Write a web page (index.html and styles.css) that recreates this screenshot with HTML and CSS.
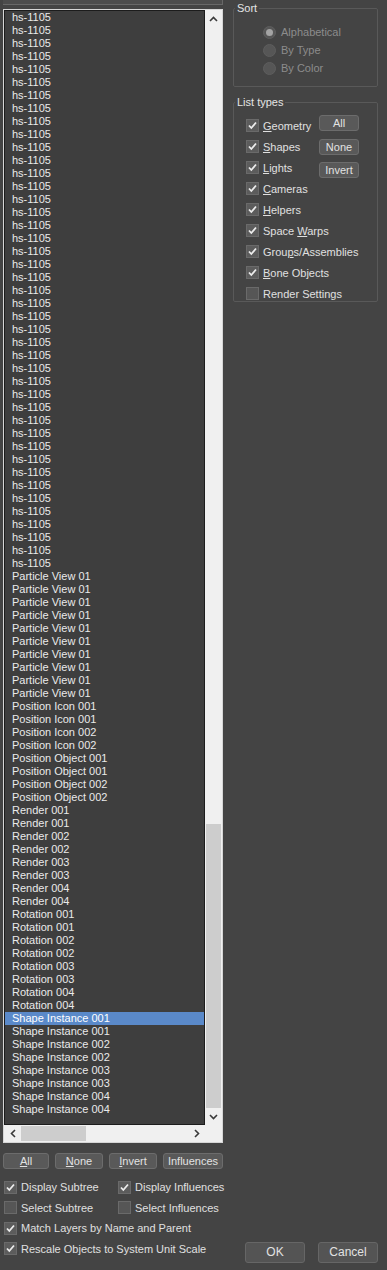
FILE: index.html
```html
<!DOCTYPE html>
<html>
<head>
<meta charset="utf-8">
<link rel="stylesheet" href="styles.css">
</head>
<body>
<div class="page">
  <div class="left">
    <div class="topstrip"></div>
    <div class="frame">
      <div class="list">
        <div class="row">hs-1105</div><div class="row">hs-1105</div><div class="row">hs-1105</div><div class="row">hs-1105</div><div class="row">hs-1105</div>
        <div class="row">hs-1105</div><div class="row">hs-1105</div><div class="row">hs-1105</div><div class="row">hs-1105</div><div class="row">hs-1105</div>
        <div class="row">hs-1105</div><div class="row">hs-1105</div><div class="row">hs-1105</div><div class="row">hs-1105</div><div class="row">hs-1105</div>
        <div class="row">hs-1105</div><div class="row">hs-1105</div><div class="row">hs-1105</div><div class="row">hs-1105</div><div class="row">hs-1105</div>
        <div class="row">hs-1105</div><div class="row">hs-1105</div><div class="row">hs-1105</div><div class="row">hs-1105</div><div class="row">hs-1105</div>
        <div class="row">hs-1105</div><div class="row">hs-1105</div><div class="row">hs-1105</div><div class="row">hs-1105</div><div class="row">hs-1105</div>
        <div class="row">hs-1105</div><div class="row">hs-1105</div><div class="row">hs-1105</div><div class="row">hs-1105</div><div class="row">hs-1105</div>
        <div class="row">hs-1105</div><div class="row">hs-1105</div><div class="row">hs-1105</div><div class="row">hs-1105</div><div class="row">hs-1105</div>
        <div class="row">hs-1105</div><div class="row">hs-1105</div><div class="row">hs-1105</div>
        <div class="row">Particle View 01</div><div class="row">Particle View 01</div><div class="row">Particle View 01</div><div class="row">Particle View 01</div><div class="row">Particle View 01</div>
        <div class="row">Particle View 01</div><div class="row">Particle View 01</div><div class="row">Particle View 01</div><div class="row">Particle View 01</div><div class="row">Particle View 01</div>
        <div class="row">Position Icon 001</div><div class="row">Position Icon 001</div>
        <div class="row">Position Icon 002</div><div class="row">Position Icon 002</div>
        <div class="row">Position Object 001</div><div class="row">Position Object 001</div>
        <div class="row">Position Object 002</div><div class="row">Position Object 002</div>
        <div class="row">Render 001</div><div class="row">Render 001</div>
        <div class="row">Render 002</div><div class="row">Render 002</div>
        <div class="row">Render 003</div><div class="row">Render 003</div>
        <div class="row">Render 004</div><div class="row">Render 004</div>
        <div class="row">Rotation 001</div><div class="row">Rotation 001</div>
        <div class="row">Rotation 002</div><div class="row">Rotation 002</div>
        <div class="row">Rotation 003</div><div class="row">Rotation 003</div>
        <div class="row">Rotation 004</div><div class="row">Rotation 004</div>
        <div class="row selected">Shape Instance 001</div><div class="row">Shape Instance 001</div>
        <div class="row">Shape Instance 002</div><div class="row">Shape Instance 002</div>
        <div class="row">Shape Instance 003</div><div class="row">Shape Instance 003</div>
        <div class="row">Shape Instance 004</div><div class="row">Shape Instance 004</div>
      </div>
      <div class="vscroll">
        <div class="arrow"><svg width="9" height="6" viewBox="0 0 9 6"><polyline points="1,5 4.5,1.5 8,5" fill="none" stroke="#3a3a3a" stroke-width="1.6"/></svg></div>
        <div class="track"><div class="thumb"></div></div>
        <div class="arrow"><svg width="9" height="6" viewBox="0 0 9 6"><polyline points="1,1 4.5,4.5 8,1" fill="none" stroke="#3a3a3a" stroke-width="1.6"/></svg></div>
      </div>
      <div class="hscroll">
        <div class="arrow"><svg width="6" height="9" viewBox="0 0 6 9"><polyline points="5,1 1.5,4.5 5,8" fill="none" stroke="#3a3a3a" stroke-width="1.6"/></svg></div>
        <div class="htrack"><div class="hthumb"></div></div>
        <div class="arrow"><svg width="6" height="9" viewBox="0 0 6 9"><polyline points="1,1 4.5,4.5 1,8" fill="none" stroke="#3a3a3a" stroke-width="1.6"/></svg></div>
      </div>
      <div class="corner"></div>
    </div>
    <div class="btnrow">
      <button class="btn w46"><u>A</u>ll</button>
      <button class="btn w48"><u>N</u>one</button>
      <button class="btn w48"><u>I</u>nvert</button>
      <button class="btn w60">Influences</button>
    </div>
    <div class="opts">
      <label class="opt"><span class="cb on"><svg width="11" height="11" viewBox="0 0 11 11"><polyline points="2,5.5 4.3,8 9,2.5" fill="none" stroke="#ececec" stroke-width="1.8"/></svg></span>Display Subtree</label>
      <label class="opt"><span class="cb on"><svg width="11" height="11" viewBox="0 0 11 11"><polyline points="2,5.5 4.3,8 9,2.5" fill="none" stroke="#ececec" stroke-width="1.8"/></svg></span>Display Influences</label>
      <label class="opt"><span class="cb"></span>Select Subtree</label>
      <label class="opt"><span class="cb"></span>Select Influences</label>
      <label class="opt span2"><span class="cb on"><svg width="11" height="11" viewBox="0 0 11 11"><polyline points="2,5.5 4.3,8 9,2.5" fill="none" stroke="#ececec" stroke-width="1.8"/></svg></span>Match Layers by Name and Parent</label>
      <label class="opt span2"><span class="cb on"><svg width="11" height="11" viewBox="0 0 11 11"><polyline points="2,5.5 4.3,8 9,2.5" fill="none" stroke="#ececec" stroke-width="1.8"/></svg></span>Rescale Objects to System Unit Scale</label>
    </div>
  </div>
  <div class="right">
    <fieldset class="group">
      <legend>Sort</legend>
      <div class="sortbody">
        <div class="radio"><span class="rb sel"></span>Alphabetical</div>
        <div class="radio"><span class="rb"></span>By Type</div>
        <div class="radio"><span class="rb"></span>By Color</div>
      </div>
    </fieldset>
    <fieldset class="group types">
      <legend>List types</legend>
      <div class="typegrid">
        <div class="checks">
          <label class="chk"><span class="cb on"><svg width="11" height="11" viewBox="0 0 11 11"><polyline points="2,5.5 4.3,8 9,2.5" fill="none" stroke="#ececec" stroke-width="1.8"/></svg></span><span><u>G</u>eometry</span></label>
          <label class="chk"><span class="cb on"><svg width="11" height="11" viewBox="0 0 11 11"><polyline points="2,5.5 4.3,8 9,2.5" fill="none" stroke="#ececec" stroke-width="1.8"/></svg></span><span><u>S</u>hapes</span></label>
          <label class="chk"><span class="cb on"><svg width="11" height="11" viewBox="0 0 11 11"><polyline points="2,5.5 4.3,8 9,2.5" fill="none" stroke="#ececec" stroke-width="1.8"/></svg></span><span><u>L</u>ights</span></label>
          <label class="chk"><span class="cb on"><svg width="11" height="11" viewBox="0 0 11 11"><polyline points="2,5.5 4.3,8 9,2.5" fill="none" stroke="#ececec" stroke-width="1.8"/></svg></span><span><u>C</u>ameras</span></label>
          <label class="chk"><span class="cb on"><svg width="11" height="11" viewBox="0 0 11 11"><polyline points="2,5.5 4.3,8 9,2.5" fill="none" stroke="#ececec" stroke-width="1.8"/></svg></span><span><u>H</u>elpers</span></label>
          <label class="chk"><span class="cb on"><svg width="11" height="11" viewBox="0 0 11 11"><polyline points="2,5.5 4.3,8 9,2.5" fill="none" stroke="#ececec" stroke-width="1.8"/></svg></span><span>Space <u>W</u>arps</span></label>
          <label class="chk"><span class="cb on"><svg width="11" height="11" viewBox="0 0 11 11"><polyline points="2,5.5 4.3,8 9,2.5" fill="none" stroke="#ececec" stroke-width="1.8"/></svg></span><span>Grou<u>p</u>s/Assemblies</span></label>
          <label class="chk"><span class="cb on"><svg width="11" height="11" viewBox="0 0 11 11"><polyline points="2,5.5 4.3,8 9,2.5" fill="none" stroke="#ececec" stroke-width="1.8"/></svg></span><span><u>B</u>one Objects</span></label>
          <label class="chk"><span class="cb"></span><span>Render Settings</span></label>
        </div>
        <div class="typebtns">
          <button class="btn tb">All</button>
          <button class="btn tb">None</button>
          <button class="btn tb">Invert</button>
        </div>
      </div>
    </fieldset>
    <div class="dlgbtns">
      <button class="btn dlg">OK</button>
      <button class="btn dlg">Cancel</button>
    </div>
  </div>
</div>
</body>
</html>
```
FILE: styles.css
```css
* { box-sizing: border-box; }
html, body { margin: 0; padding: 0; }
body {
  background: #444444;
  font-family: "Liberation Sans", Arial, sans-serif;
  font-size: 11px;
  color: #e0e0e0;
  width: 387px;
  height: 1270px;
  overflow: hidden;
}
.page {
  display: flex;
  height: 1270px;
}
.left {
  width: 220px;
  margin-left: 3px;
  display: flex;
  flex-direction: column;
}
.topstrip {
  height: 5px;
  background: #4c4c4c;
  border-bottom: 1px solid #686868;
  border-right: 1px solid #686868;
}
.frame {
  margin-top: 4px;
  height: 1134px;
  border: 1px solid #d6d6d6;
  background: #f0f0f0;
  display: grid;
  grid-template-columns: 201px 17px;
  grid-template-rows: 1115px 17px;
}
.list {
  background: #3e3e3e;
  border: 1px solid #1c1c1c;
  overflow: hidden;
}
.row {
  height: 13px;
  line-height: 13px;
  padding-left: 7px;
  color: #eaeaea;
  white-space: nowrap;
}
.row.selected {
  background: #5a89c9;
  color: #ffffff;
}
.vscroll {
  display: flex;
  flex-direction: column;
}
.arrow {
  flex: 0 0 17px;
  display: flex;
  align-items: center;
  justify-content: center;
}
.track {
  flex: 1;
  display: flex;
  flex-direction: column;
  justify-content: flex-end;
}
.thumb {
  height: 284px;
  margin: 0 1px;
  background: #cdcdcd;
}
.hscroll {
  display: flex;
}
.htrack {
  flex: 1;
  display: flex;
}
.hthumb {
  width: 65px;
  margin: 1px 0;
  background: #cdcdcd;
}
.corner { background: #f0f0f0; }

.btn {
  font-family: "Liberation Sans", Arial, sans-serif;
  font-size: 11px;
  color: #e2e2e2;
  background: #595959;
  border: 1px solid #6c6c6c;
  border-radius: 3px;
  padding: 0;
  line-height: 14px;
  height: 16px;
  text-align: center;
}
.btnrow {
  margin-top: 10px;
  display: flex;
  justify-content: space-between;
}
.w46 { width: 46px; }
.w48 { width: 48px; }
.w60 { width: 60px; }

.opts {
  margin-top: 8px;
  display: grid;
  grid-template-columns: 114px 1fr;
  grid-auto-rows: 20.5px;
  padding-left: 1px;
}
.opt {
  display: flex;
  align-items: center;
  gap: 4px;
  color: #e0e0e0;
  white-space: nowrap;
}
.span2 { grid-column: span 2; }
.cb {
  width: 13px;
  height: 13px;
  flex: 0 0 13px;
  background: #565656;
  border: 1px solid #6a6a6a;
  display: flex;
  align-items: center;
  justify-content: center;
}
.cb.on { background: #5c5c5c; }

.right {
  width: 145px;
  margin-left: 10px;
  display: flex;
  flex-direction: column;
}
.group {
  margin: 2px 0 0 0;
  padding: 0;
  border: 1px solid #595959;
  border-radius: 2px;
  min-width: 0;
}
.group legend {
  padding: 0 2px;
  margin-left: 1px;
  line-height: 13px;
  color: #e4e4e4;
}
.sortbody {
  padding: 8px 0 9px 29px;
}
.radio {
  height: 18px;
  display: flex;
  align-items: center;
  gap: 5px;
  color: #8c8c8c;
}
.rb {
  width: 13px;
  height: 13px;
  border-radius: 50%;
  background: #565656;
  border: 1px solid #5e5e5e;
  display: flex;
  align-items: center;
  justify-content: center;
}
.rb.sel::after {
  content: "";
  width: 7px;
  height: 7px;
  border-radius: 50%;
  background: #a4a4a4;
}
.types {
  margin-top: 9px;
}
.typegrid {
  display: grid;
  grid-template-columns: minmax(0, 1fr) 40px;
  padding: 6px 18px 1px 12px;
}
.checks {
  margin-top: 4px;
  display: flex;
  flex-direction: column;
  gap: 8px;
}
.chk {
  height: 13px;
  display: flex;
  align-items: center;
  gap: 4px;
  white-space: nowrap;
  color: #e0e0e0;
}
.typebtns {
  display: flex;
  flex-direction: column;
  gap: 7.5px;
}
.tb { width: 40px; }
.dlgbtns {
  margin-top: auto;
  margin-bottom: 7px;
  display: flex;
  justify-content: flex-end;
  gap: 13px;
}
.dlg {
  width: 60px;
  height: 21px;
  line-height: 19px;
  font-size: 12px;
  background: #545454;
  border-color: #666666;
}
```
